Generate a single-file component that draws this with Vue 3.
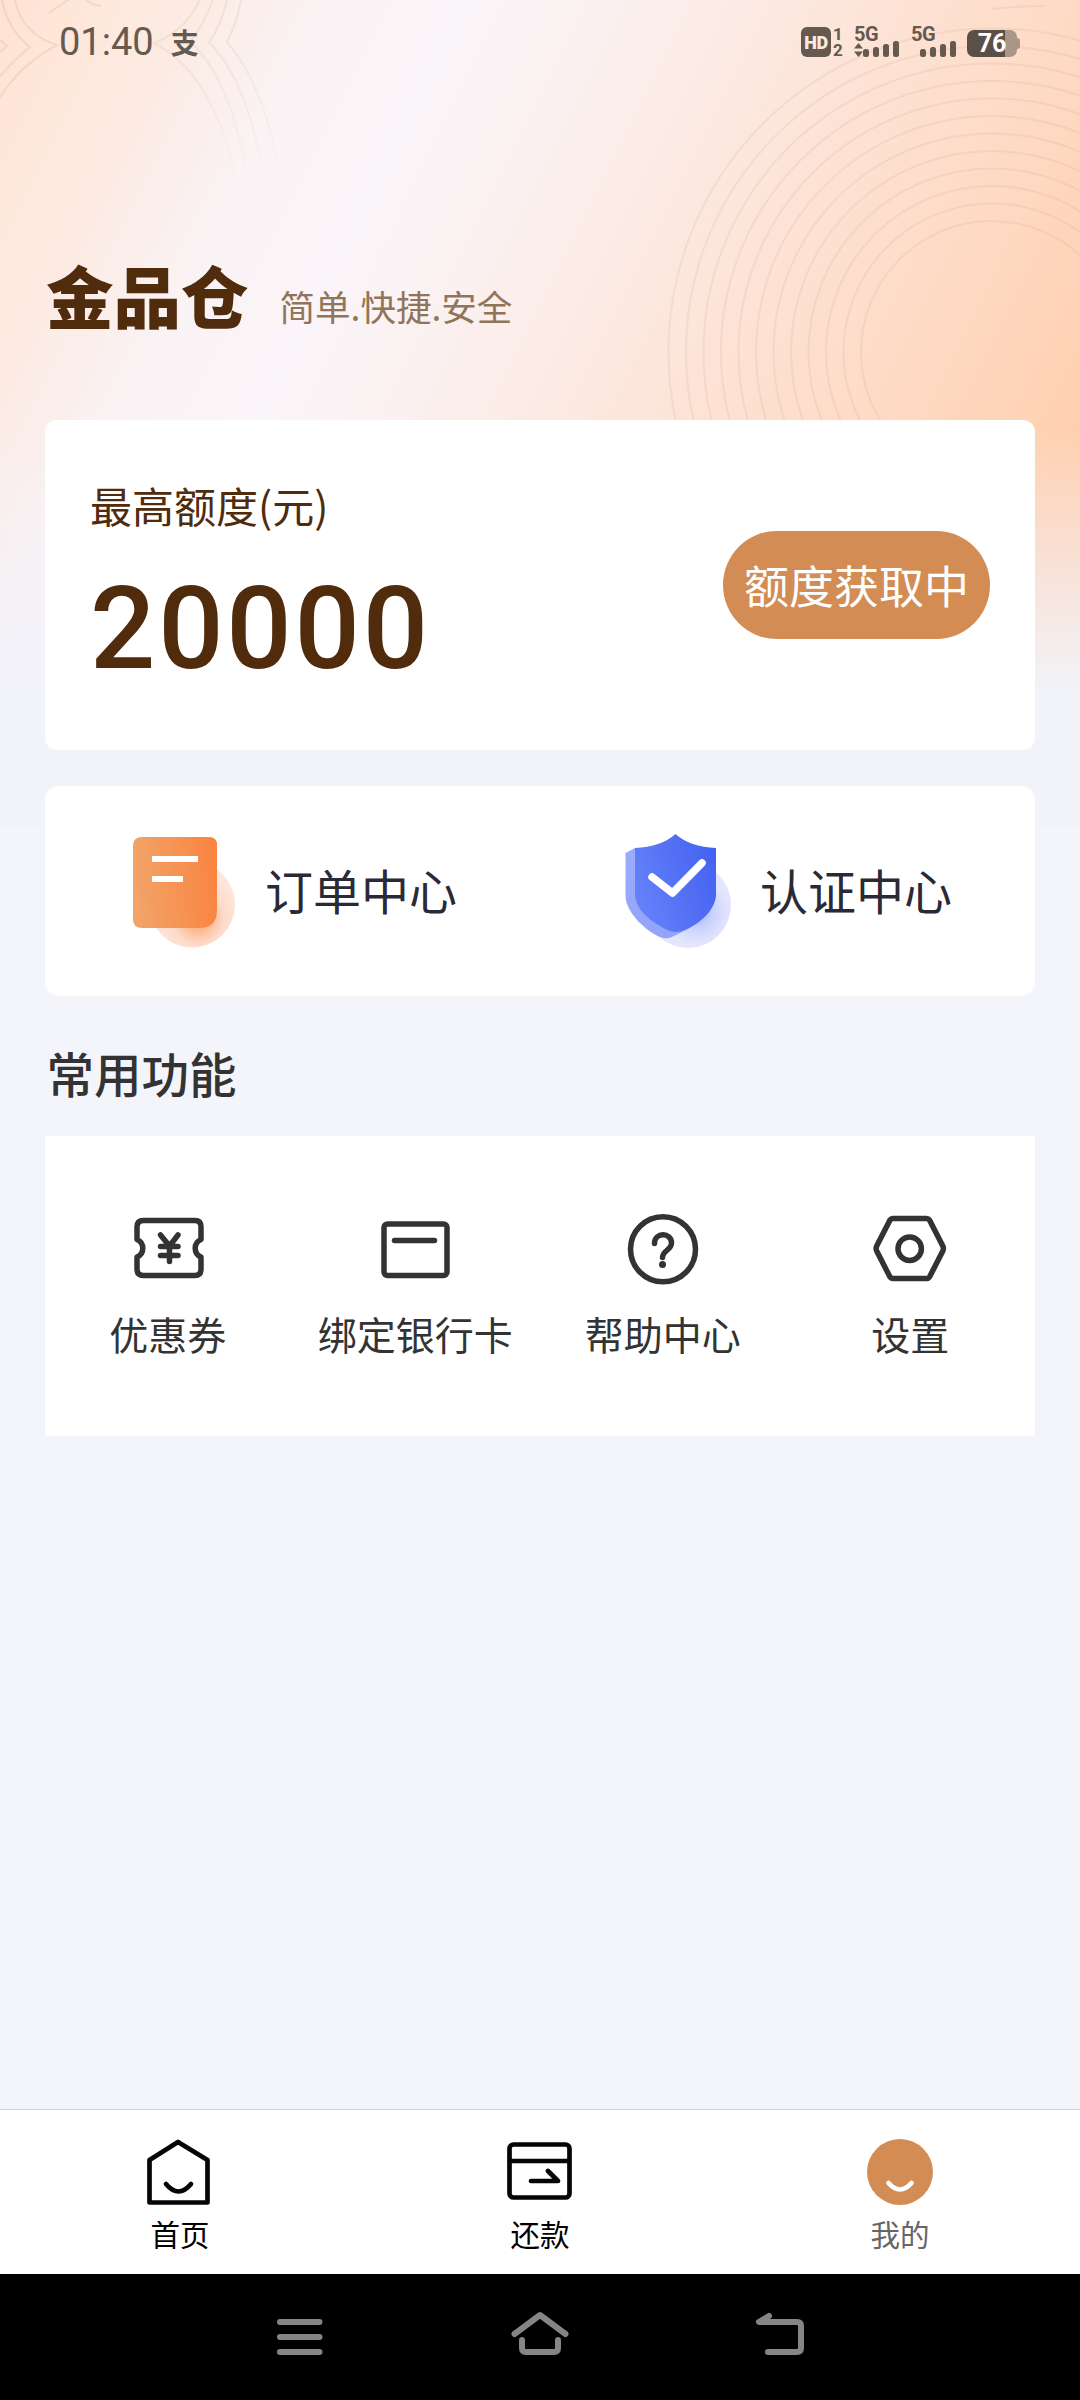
<script setup>
const rings = Array.from({ length: 12 }, (_, i) => 131 + i * 17.500)
const bars = [8, 10, 13, 16]
</script>

<template>
  <div class="page">
    <svg class="backdrop" viewBox="0 0 1080 420" aria-hidden="true">
      <defs>
        <linearGradient id="fade" gradientUnits="userSpaceOnUse" x1="0" y1="20" x2="0" y2="200"><stop offset="0" stop-color="#c79f7c" stop-opacity=".17" /><stop offset="1" stop-color="#c79f7c" stop-opacity="0" /></linearGradient>
      </defs>
      <g fill="none" stroke="#c79f7c" stroke-width="2">
        <g stroke-opacity=".16">
          <circle v-for="r in rings" :key="r" cx="992" cy="352" :r="r" />
          <path d="M992 9Q1018 6 1045 6" />
        </g>
        <g stroke-opacity=".2">
          <path d="M15 0Q22 34 57 45Q25 62 5 90Q0 97 -4 104" />
          <path d="M2 0Q8 30 30 47Q12 62 0 76" />
          <path d="M0 40L7 46L0 52" />
          <path d="M49 13L68 0M86 0Q92 5 101 6" />
        </g>
        <g stroke="url(#fade)">
          <path d="M200 0Q184 32 154 43Q214 74 236 180" />
          <path d="M213 0Q202 28 190 42Q232 78 250 190" />
          <path d="M227 0Q220 28 209 42Q252 86 266 195" />
          <path d="M241 0Q238 20 227 42Q272 95 283 205" />
        </g>
      </g>
    </svg>

    <header class="status">
      <div class="status-left">
        <span class="time">01:40</span>
        <span class="alipay">支</span>
      </div>
      <div class="status-right">
        <span class="hd">HD</span>
        <span class="sims"><i>1</i><i>2</i></span>
        <span class="signal first">
          <b>5G</b>
          <span class="bars">
            <svg width="9" height="14" viewBox="0 0 9 14"><path d="M0 5.5L4.5 0L9 5.5ZM0 8.5H9L4.5 14Z" fill="#66594f" /></svg>
            <em v-for="h in bars" :key="h" :style="{ height: h + 'px' }"></em>
          </span>
        </span>
        <span class="signal">
          <b>5G</b>
          <span class="bars">
            <em v-for="h in bars" :key="h" :style="{ height: h + 'px' }"></em>
          </span>
        </span>
        <span class="battery">76</span><span class="tip"></span>
      </div>
    </header>

    <div class="brand">
      <h1>金品仓</h1>
      <p>简单.快捷.安全</p>
    </div>

    <section class="card quota">
      <div>
        <div class="quota-label">最高额度(元)</div>
        <div class="quota-value">20000</div>
      </div>
      <button>额度获取中</button>
    </section>

    <section class="card centers">
      <div class="center-item">
        <svg width="110" height="120" viewBox="130 831 110 120">
          <defs>
            <linearGradient id="doc" x1="0" y1=".1" x2="1" y2="0"><stop offset="0" stop-color="#f2a368" /><stop offset="1" stop-color="#fa833f" /></linearGradient>
            <radialGradient id="docGlow" gradientUnits="userSpaceOnUse" cx="198" cy="918" r="44"><stop offset="0" stop-color="#fba56f" /><stop offset=".25" stop-color="#fcb68c" /><stop offset=".6" stop-color="#fddbca" /><stop offset="1" stop-color="#fde6dc" /></radialGradient>
          </defs>
          <circle cx="192" cy="904.500" r="43" fill="url(#docGlow)" />
          <path d="M142 837H209Q217 837 217 845V910Q217 928 199 928H142Q133 928 133 919V846Q133 837 142 837Z" fill="url(#doc)" />
          <path d="M152 859H198M152 879H183" stroke="#fff" stroke-width="6.200" />
        </svg>
        <span>订单中心</span>
      </div>
      <div class="center-item">
        <svg width="110" height="120" viewBox="625 831 110 120">
          <defs>
            <linearGradient id="shield" x1="0" y1=".7" x2="1" y2=".3"><stop offset="0" stop-color="#6682fa" /><stop offset="1" stop-color="#4563f0" /></linearGradient>
            <linearGradient id="side" x1="0" y1="0" x2="0" y2="1"><stop offset="0" stop-color="#9bacfc" /><stop offset="1" stop-color="#94a3fa" /></linearGradient>
            <radialGradient id="shieldGlow" gradientUnits="userSpaceOnUse" cx="697" cy="912" r="40"><stop offset="0" stop-color="#a3b0fb" /><stop offset=".35" stop-color="#c6cefc" /><stop offset=".75" stop-color="#e1e3fd" /><stop offset="1" stop-color="#e6e7fe" /></radialGradient>
          </defs>
          <circle cx="688" cy="905" r="43" fill="url(#shieldGlow)" />
          <path d="M635 848L625.500 853V896C626 914 648 932 660 937Q667 940 674 936L690 928Z" fill="url(#side)" />
          <path d="M675.500 834Q690 847 716 848V896C714 912 699 924 685 930Q676 934 667 930C650 921 637 911 635 896V848Q661 847 675.500 834Z" fill="url(#shield)" />
          <path d="M652 877L672.500 893L702 863" fill="none" stroke="#fff" stroke-width="7.500" stroke-linecap="round" stroke-linejoin="round" />
        </svg>
        <span>认证中心</span>
      </div>
    </section>

    <h2>常用功能</h2>

    <section class="tools">
      <div class="tool">
        <svg width="80" height="80" viewBox="128.500 1209 80 80">
          <path d="M143 1220.500H194.500Q200.500 1220.500 200.500 1227V1239.500A9.500 9.500 0 0 0 200.500 1257V1269Q200.500 1275.500 194.500 1275.500H143Q136.500 1275.500 136.500 1269V1257A9.500 9.500 0 0 0 136.500 1239.500V1227Q136.500 1220.500 143 1220.500Z" />
          <path d="M160 1235L169 1246L177.500 1235M160 1246.500H177.500M160 1255.500H177.500M169 1246V1261.500" />
        </svg>
        <span>优惠券</span>
      </div>
      <div class="tool">
        <svg width="80" height="80" viewBox="376 1209 80 80">
          <rect x="384" y="1224" width="63" height="51.500" rx="3.500" />
          <path d="M394.500 1240.500H434.500" />
        </svg>
        <span>绑定银行卡</span>
      </div>
      <div class="tool">
        <svg width="80" height="80" viewBox="623.500 1209 80 80">
          <circle cx="662.500" cy="1249.300" r="32.500" />
          <path d="M654 1243.500C654 1232 671 1232 671 1243C671 1250 662 1250.500 662 1257.500" />
          <circle cx="662" cy="1264.500" r="3.500" fill="#333" stroke="none" />
        </svg>
        <span>帮助中心</span>
      </div>
      <div class="tool">
        <svg width="80" height="80" viewBox="871 1209 80 80">
          <path d="M893 1218.500H926.500Q928.500 1218.500 929.500 1220L942.800 1246Q944 1248.500 942.800 1251L929.500 1277Q928.500 1278.500 926.500 1278.500H893Q891.500 1278.500 890 1277L876.700 1251Q875.500 1248.500 876.700 1246L890 1220Q891.500 1218.500 893 1218.500Z" />
          <circle cx="909.700" cy="1248.700" r="11.700" />
        </svg>
        <span>设置</span>
      </div>
    </section>

    <nav class="tabs">
      <div class="tab">
        <svg width="80" height="72" viewBox="140 2136 80 72">
          <path d="M178 2142L207.500 2160V2202.500H149.500V2160Z" />
          <path d="M166 2184Q178.500 2199 191 2184" />
        </svg>
        <span>首页</span>
      </div>
      <div class="tab">
        <svg width="80" height="72" viewBox="500 2136 80 72">
          <rect x="509.500" y="2144.500" width="60" height="53" rx="4" />
          <path d="M510 2161H569M531 2181H558L548 2171" />
        </svg>
        <span>还款</span>
      </div>
      <div class="tab active">
        <svg width="80" height="72" viewBox="860 2136 80 72">
          <circle cx="900" cy="2172" r="33" fill="#d28c54" stroke="none" />
          <path d="M888.500 2183Q900 2196 911.500 2183" stroke="#fff" />
        </svg>
        <span>我的</span>
      </div>
    </nav>

    <footer class="system">
      <svg width="60" height="60" viewBox="270 2307 60 60"><path d="M280 2322H319.500M280 2337H319.500M280 2352H319.500" /></svg>
      <svg width="60" height="60" viewBox="510 2307 60 60"><path d="M514.500 2334L540 2315L565.500 2334M522 2340V2348Q522 2352 526 2352H554Q558 2352 558 2348V2340" /></svg>
      <svg width="60" height="60" viewBox="750 2307 60 60"><path d="M769 2316L759 2322H797Q801 2322 801 2326V2348Q801 2352 797 2352H768" /></svg>
    </footer>
  </div>
</template>

<style>
html,
body {
  margin: 0;
  background: #f4f5fb;
}
</style>

<style scoped>
.page {
  position: relative;
  display: flex;
  flex-direction: column;
  box-sizing: border-box;
  width: 1080px;
  height: 2400px;
  overflow: hidden;
  font-family: "Noto Sans CJK SC", "Noto Sans", sans-serif;
  color: #333;
  background:
    linear-gradient(to bottom, rgba(242, 242, 249, 0) 430px, #f2f2f9 690px) 0 0 / 1080px 827px no-repeat,
    linear-gradient(116.5deg, #fee2d3 0, #fee8db 90px, #fcebe4 180px, #faf3f5 300px, #faf5f9 420px, #fbf1f1 530px, #fbebe5 660px, #fde3d6 800px, #fedbc7 950px, #ffd0b0 1154px) 0 0 / 1080px 827px no-repeat,
    #f4f5fb;
}
.backdrop {
  position: absolute;
  top: 0;
  left: 0;
  width: 1080px;
  height: 420px;
}
.status,
.brand,
.card {
  position: relative;
}
.status {
  display: flex;
  justify-content: space-between;
  height: 84px;
  padding: 0 60px 0 59px;
  color: #66594f;
}
.status-left,
.status-right {
  display: flex;
  align-items: center;
  height: 84px;
}
.time {
  font: 400 38px/86px Roboto, sans-serif;
  letter-spacing: 0;
}
.alipay {
  margin-left: 17px;
  font-size: 28px;
  font-weight: 700;
  line-height: 80px;
}
.hd {
  width: 30px;
  height: 30px;
  border-radius: 6px;
  background: #66594f;
  color: #fdebe2;
  font: 900 18px/31px Roboto, sans-serif;
  letter-spacing: -0.5px;
  text-align: center;
}
.sims {
  display: flex;
  flex-direction: column;
  width: 12px;
  margin-left: 1px;
}
.sims i {
  font: 700 17px/16px Roboto, sans-serif;
  text-align: center;
}
.signal {
  display: flex;
  flex-direction: column;
  justify-content: space-between;
  width: 45px;
  height: 30px;
  margin-left: 10px;
}
.signal + .signal {
  margin-left: 12px;
}
.signal b {
  height: 14px;
  font: 700 20px/15px Roboto, sans-serif;
  letter-spacing: -0.5px;
}
.bars {
  display: flex;
  align-items: flex-end;
  justify-content: flex-end;
  gap: 4px;
  height: 16px;
}
.bars svg {
  flex: none;
  margin-right: -4px;
}
.bars em {
  flex: none;
  width: 6px;
  border-radius: 2.500px;
  background: #66594f;
}
.battery {
  width: 50px;
  height: 27px;
  margin-left: 11px;
  margin-top: 3px;
  border-radius: 7px;
  background: linear-gradient(90deg, #5b5048 0 38px, #a99689 38px);
  color: #fff;
  font: 700 25px/28px Roboto, sans-serif;
  text-align: center;
}
.tip {
  width: 3px;
  height: 11px;
  margin-top: 3px;
  border-radius: 0 3px 3px 0;
  background: #a99689;
}
.brand {
  display: flex;
  align-items: flex-end;
  height: 250px;
  padding-left: 46px;
}
.brand h1 {
  margin: 0;
  color: #502b0c;
  font-size: 67.500px;
  font-weight: 900;
  line-height: 80px;
}
.brand p {
  margin: 0 0 2px 31px;
  color: #907558;
  font-size: 35.500px;
  line-height: 52px;
}
.card {
  width: 990px;
  margin: 0 45px;
  background: #fff;
}
.quota {
  display: flex;
  justify-content: space-between;
  box-sizing: border-box;
  height: 330px;
  margin-top: 86px;
  padding: 56px 45px 0;
  border-radius: 12px;
  color: #502b0c;
}
.quota-label {
  font-size: 42px;
  line-height: 58px;
}
.quota-value {
  margin-top: 28px;
  font: 500 115px/134px Roboto, sans-serif;
  letter-spacing: 2.800px;
}
.quota button {
  width: 267px;
  height: 108px;
  margin-top: 55px;
  padding: 0 0 1px;
  border: 0;
  border-radius: 54px;
  background: #d28c54;
  color: #fff;
  font-family: inherit;
  font-size: 45px;
  line-height: 66px;
  white-space: nowrap;
}
.centers {
  display: flex;
  height: 210px;
  margin-top: 36px;
  border-radius: 14px;
}
.center-item {
  display: flex;
  align-items: center;
  flex: 1;
  padding-left: 85px;
  color: #2a2a36;
  font-size: 48px;
  line-height: 70px;
}
.center-item span {
  margin: 0 0 4px 25px;
}
h2 {
  margin: 47px 0 33px 46.500px;
  font-size: 47.500px;
  font-weight: 500;
  line-height: 60px;
}
.tools {
  display: flex;
  width: 990px;
  height: 300px;
  margin: 0 45px;
  background: #fff;
}
.tool {
  display: flex;
  flex: 1;
  flex-direction: column;
  align-items: center;
  padding-top: 73px;
  font-size: 39px;
  line-height: 56px;
  white-space: nowrap;
}
.tool svg {
  fill: none;
  stroke: #333;
  stroke-width: 5.500;
  stroke-linecap: round;
  stroke-linejoin: round;
}
.tool span {
  margin: 16px 2px 0 0;
}
.tabs {
  display: flex;
  box-sizing: border-box;
  height: 165px;
  margin-top: auto;
  border-top: 1px solid #cfd0d5;
  background: #fff;
}
.tab {
  display: flex;
  flex: 1;
  flex-direction: column;
  align-items: center;
  padding-top: 26px;
  color: #000;
  font-size: 29.500px;
  line-height: 44px;
}
.tab svg {
  fill: none;
  stroke: #050505;
  stroke-width: 4.700;
  stroke-linecap: round;
  stroke-linejoin: round;
}
.tab span {
  margin-top: 3px;
}
.tab.active {
  color: #666;
}
.system {
  display: flex;
  justify-content: center;
  gap: 180px;
  height: 93px;
  padding-top: 33px;
  background: #000;
}
.system svg {
  fill: none;
  stroke: #858585;
  stroke-width: 6;
  stroke-linecap: round;
  stroke-linejoin: round;
}
</style>
